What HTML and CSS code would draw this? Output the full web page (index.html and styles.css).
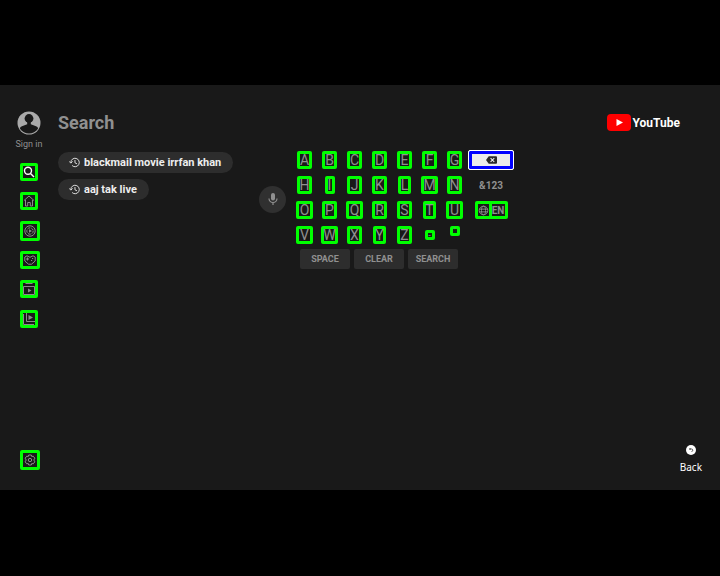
FILE: index.html
```html
<!DOCTYPE html>
<html lang="en">
<head>
<meta charset="utf-8">
<title>Search - YouTube</title>
<link rel="stylesheet" href="styles.css">
</head>
<body>
<div class="app">
  <aside class="sidebar">
    <a class="account" href="#">
      <svg class="avatar" viewBox="0 0 24 24"><circle cx="12" cy="12" r="11.5" fill="#aaa"/><circle cx="12" cy="7.5" r="4.4" fill="#191919"/><path d="M10.2 10h3.6v3.2l5.2 2c1.600.6 2 1.500 2 2.500a11 11 0 0 1-18 0c0-1 .4-1.900 2-2.500l5.200-2z" fill="#191919"/></svg>
      <span>Sign in</span>
    </a>
    <nav class="menu">
      <a class="mark active" href="#" aria-label="Search"><svg viewBox="0 0 12 12"><circle cx="5" cy="4.700" r="3.500" stroke-width="1.400"/><path d="M7.500 7.500l3.500 3.500" stroke-width="1.400"/></svg></a>
      <a class="mark" href="#" aria-label="Home"><svg viewBox="0 0 12 12"><path d="M1 5.500L6 1l5 4.500M2.500 5v6h2.200V7.500h2.600V11h2.200V5"/></svg></a>
      <a class="mark tall" href="#" aria-label="Live"><svg viewBox="0 0 12 12"><circle cx="6" cy="6" r="5.200"/><circle cx="6" cy="6" r="3.200" stroke-dasharray="3 1"/><path d="M5 4.200v3.600L8 6z" fill="currentColor" stroke="none"/></svg></a>
      <a class="mark wide" href="#" aria-label="Gaming"><svg viewBox="0 0 12 12"><path d="M.8 3L3 1.800l3 1.500 3-1.500L11.200 3v4L7.500 10.200h-3L.8 7zM2 5h3M3.500 3.500v3M8 4.500h1.200M7 6.500h1.200"/></svg></a>
      <a class="mark" href="#" aria-label="Subscriptions"><svg viewBox="0 0 12 12"><path d="M2.500 .5h7M.5 3.500h11v8H.5z"/><path d="M5 5.500v4L8.500 7.500z" fill="currentColor" stroke="none"/></svg></a>
      <a class="mark" href="#" aria-label="Library"><svg viewBox="0 0 12 12"><path d="M.5 1v10.500H11M3.500 0v8.500H12"/><path d="M5.500 2v5L10 4.500z" fill="currentColor" stroke="none"/></svg></a>
    </nav>
    <a class="mark tall settings" href="#" aria-label="Settings"><svg viewBox="0 0 12 12"><path d="M4.700 1h2.600l.4 1.500 1.600-.3 1.500 2-1 1.800 1 1.800-1.500 2-1.600-.3-.4 1.500H4.700l-.4-1.500-1.600.3-1.500-2 1-1.800-1-1.800 1.500-2 1.600.3z"/><circle cx="6" cy="6" r="1.700"/></svg></a>
  </aside>
  <main class="page">
    <header class="top">
      <h1>Search</h1>
      <div class="logo">
        <svg viewBox="0 0 24 17"><rect width="24" height="17" rx="4" fill="#f00"/><path d="M9.500 5v7l6.500-3.500z" fill="#fff"/></svg>
        <span>YouTube</span>
      </div>
    </header>
    <div class="content">
      <div class="history">
        <button class="chip"><svg viewBox="0 0 12 12"><path d="M2 6a4.600 4.600 0 1 1 1.400 3.300M.3 4.800L2 6.700l1.900-1.900M6.500 3.300v3l2.300 1.200"/></svg>blackmail movie irrfan khan</button>
        <button class="chip"><svg viewBox="0 0 12 12"><path d="M2 6a4.600 4.600 0 1 1 1.400 3.300M.3 4.800L2 6.700l1.900-1.900M6.500 3.300v3l2.300 1.200"/></svg>aaj tak live</button>
      </div>
      <button class="mic" aria-label="Voice search"><svg viewBox="0 0 12 14"><rect x="4" y="1" width="4" height="7.500" rx="2" fill="currentColor"/><path d="M2 6.500a4 4 0 0 0 8 0M6 10.500V13" fill="none" stroke="currentColor" stroke-width="1.200"/></svg></button>
      <div class="keyboard">
        <div class="letters">
          <button class="key">A</button><button class="key">B</button><button class="key">C</button><button class="key">D</button><button class="key">E</button><button class="key">F</button><button class="key">G</button>
          <button class="key">H</button><button class="key slim">I</button><button class="key">J</button><button class="key">K</button><button class="key narrow">L</button><button class="key broad">M</button><button class="key">N</button>
          <button class="key broad">O</button><button class="key">P</button><button class="key broad">Q</button><button class="key">R</button><button class="key">S</button><button class="key narrow">T</button><button class="key broad">U</button>
          <button class="key broad">V</button><button class="key broad">W</button><button class="key">X</button><button class="key narrow">Y</button><button class="key">Z</button><button class="key dot">-</button><button class="key dot high">'</button>
        </div>
        <div class="side">
          <button class="erase" aria-label="Backspace"><svg viewBox="0 0 12 8"><path d="M3 0h8a1 1 0 0 1 1 1v6a1 1 0 0 1-1 1H3L0 4z" fill="#282828"/><path d="M5 2l4 4M9 2L5 6" stroke="#eee" stroke-width="1.200"/></svg></button>
          <button class="plain">&amp;123</button>
          <button class="language"><span class="globe"><svg viewBox="0 0 12 12"><circle cx="6" cy="6" r="4.700"/><ellipse cx="6" cy="6" rx="2.200" ry="4.700"/><path d="M1.500 4.500h9M1.500 7.500h9"/></svg></span><span class="code">EN</span></button>
        </div>
        <div class="actions">
          <button>SPACE</button><button>CLEAR</button><button>SEARCH</button>
        </div>
      </div>
    </div>
    <button class="back"><svg viewBox="0 0 10 10"><circle cx="5" cy="5" r="5" fill="#fff"/><path d="M4.500 3L3.500 4l1 1M3.500 4H5.500a1 1 0 0 1 0 2.500" fill="none" stroke="#333" stroke-width=".8"/></svg>Back</button>
  </main>
</div>
</body>
</html>
```
FILE: styles.css
```css
* { box-sizing: border-box; }

body {
  margin: 0;
  padding-bottom: 2px;
  min-height: 100vh;
  display: flex;
  align-items: center;
  background: #000;
  color: #909090;
  font-family: Roboto, "Liberation Sans", sans-serif;
}

button {
  margin: 0;
  padding: 0;
  border: 0;
  background: none;
  color: inherit;
  font: inherit;
}

a { color: inherit; text-decoration: none; }

svg { display: block; flex: none; }

.app {
  width: 100%;
  aspect-ratio: 16 / 9;
  display: flex;
  background: #191919;
}

.sidebar {
  width: 58px;
  padding: 26px 0 20px;
  display: flex;
  flex-direction: column;
}

.account {
  display: flex;
  flex-direction: column;
  align-items: center;
  gap: 3px;
  font-size: 9px;
  line-height: 12px;
}

.avatar { width: 24px; height: 24px; }

.menu {
  height: 176px;
  margin: 8px 0 0 20px;
  display: grid;
  grid-template-rows: repeat(6, 1fr);
  align-items: center;
}

.mark {
  width: 18px;
  height: 18px;
  display: flex;
  align-items: center;
  justify-content: center;
  border: 3px solid #0f0;
  border-radius: 2px;
  color: #8c8c8c;
}

.mark svg {
  width: 12px;
  height: 12px;
  fill: none;
  stroke: currentColor;
}

.active { color: #fff; }
.wide { width: 20px; }
.tall { width: 20px; height: 20px; }
.settings { margin: auto 0 0 20px; }

.page {
  flex: 1;
  padding: 26px 18px 17px 0;
  display: flex;
  flex-direction: column;
}

.top {
  height: 24px;
  margin-right: 22px;
  display: flex;
  align-items: center;
  justify-content: space-between;
}

h1 { margin: 0; font-size: 18px; line-height: 24px; }

.logo {
  display: flex;
  align-items: center;
  gap: 2px;
  color: #fff;
  font-size: 12px;
  font-weight: 700;
  line-height: 20px;
}

.logo svg { width: 24px; height: 17px; }

.content {
  margin-top: 13px;
  display: grid;
  grid-template-columns: 201px 27px 1fr;
  align-items: start;
}

.history {
  padding-top: 4px;
  display: flex;
  flex-direction: column;
  align-items: flex-start;
  gap: 6px;
}

.chip {
  height: 21px;
  padding: 0 12px 0 11px;
  display: flex;
  align-items: center;
  gap: 4px;
  border-radius: 11px;
  background: #2d2d2d;
  color: #eee;
  font-size: 11px;
  font-weight: 700;
}

.chip svg { width: 11px; height: 11px; fill: none; stroke: currentColor; }

.mic {
  width: 27px;
  height: 27px;
  margin-top: 38px;
  display: grid;
  place-items: center;
  border-radius: 50%;
  background: #303030;
}

.mic svg { width: 12px; height: 14px; }

.keyboard {
  margin-left: 6px;
  display: grid;
  grid-template-columns: 175px 46px;
  column-gap: 1px;
}

.letters {
  display: grid;
  grid-template-columns: repeat(7, 25px);
  grid-auto-rows: 25px;
  place-items: center;
}

.key {
  width: 15px;
  height: 18px;
  display: flex;
  align-items: center;
  justify-content: center;
  border: 3px solid #0f0;
  border-radius: 2px;
  font-size: 14px;
  line-height: 12px;
}

.slim { width: 10px; }
.narrow { width: 13px; }
.broad { width: 17px; }
.dot { width: 10px; height: 10px; font-size: 9px; line-height: 4px; }
.high { align-self: start; margin-top: 3px; }

.side {
  display: grid;
  grid-auto-rows: 25px;
  place-items: center;
}

.erase {
  width: 46px;
  height: 20px;
  display: grid;
  place-items: center;
  border: 1px solid #fff;
  border-radius: 2px;
  background: #ebebeb;
  box-shadow: inset 0 0 0 3px #00f;
}

.erase svg { width: 11px; height: 8px; }

.plain, .language { font-size: 10px; font-weight: 700; }

.language { display: flex; }

.globe, .code {
  height: 18px;
  display: grid;
  place-items: center;
  border: 3px solid #0f0;
  border-radius: 2px;
}

.globe { width: 17px; }
.code { width: 19px; margin-left: -3px; }
.globe svg { width: 11px; height: 11px; fill: none; stroke: currentColor; }

.actions {
  grid-column: 1 / -1;
  margin: 1px 0 0 8px;
  display: flex;
  gap: 4px;
}

.actions button {
  width: 50px;
  height: 20px;
  border-radius: 2px;
  background: #2d2d2d;
  font-size: 9px;
  font-weight: 700;
}

.back {
  margin: auto 0 0 auto;
  display: flex;
  flex-direction: column;
  align-items: center;
  gap: 6px;
  color: #fff;
  font-family: "Noto Sans", sans-serif;
  font-size: 10px;
  line-height: 12px;
}

.back svg { width: 10px; height: 10px; }
```
